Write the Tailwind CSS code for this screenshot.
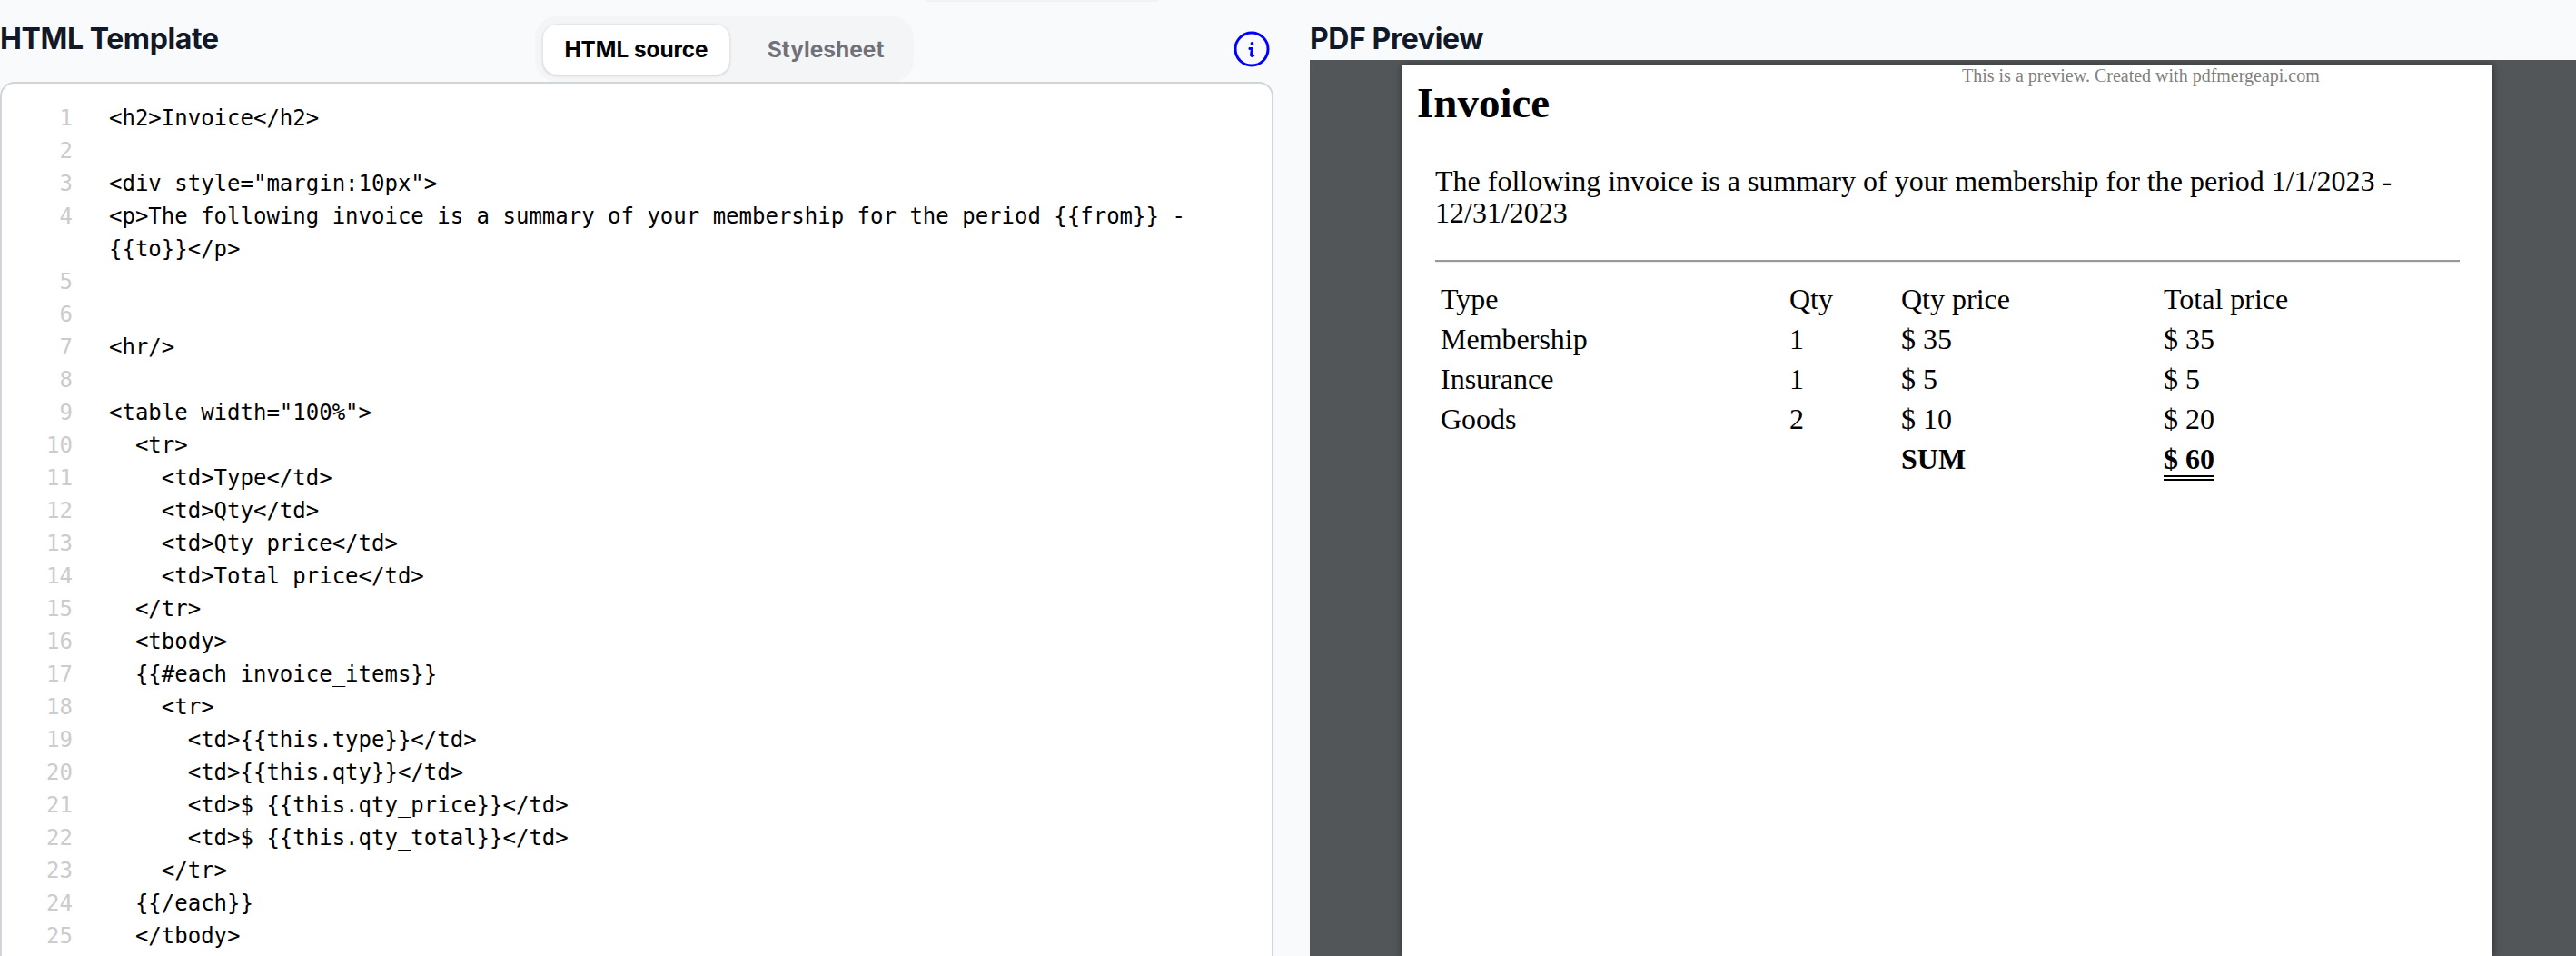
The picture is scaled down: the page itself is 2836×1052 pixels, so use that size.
<!DOCTYPE html>
<html lang="en">
  <head>
    <meta charset="UTF-8" />
    <title>PDF Merge API - Template editor</title>
    <script src="https://cdn.jsdelivr.net/npm/@tailwindcss/browser@4"></script>
  </head>
  <body class="h-screen overflow-hidden bg-[#f9fafb] font-['Inter',sans-serif] text-black">
    <div class="mx-auto h-[2px] w-[256px] translate-x-[-271px] rounded-b bg-[#f1f2f4]"></div>
    <div class="grid h-[1050px] grid-cols-[1402px_1fr] gap-x-[40px]">
      <!-- editor column -->
      <section class="flex min-w-0 flex-col">
        <div class="relative flex h-[88px] items-start">
          <h2 class="mt-[21px] text-[32px] leading-[40px] font-bold tracking-[-0.4px] whitespace-nowrap text-[#111827]">HTML Template</h2>
          <div class="absolute top-[16px] left-[589px] flex h-[72px] w-[417px] items-start rounded-[24px] bg-[#f3f4f6]/80 p-[8px] pb-0">
            <button class="h-[57px] w-[207px] shrink-0 rounded-[16px] border border-[#e5e7eb] bg-white text-[24.3px] font-bold shadow-sm">HTML source</button>
            <button class="h-[57px] w-[194px] shrink-0 pl-[16px] text-[24.5px] font-bold text-[#71717a]">Stylesheet</button>
          </div>
          <svg class="absolute top-[32px] left-[1358px]" width="40" height="40" viewBox="0 0 40 40" fill="none">
            <circle cx="20" cy="20" r="18" stroke="#0000ff" stroke-width="3" />
            <path d="M17.8 19.5h2.6l-1 7c-.1 1 .8 1.4 2.4.6" stroke="#0000ff" stroke-width="2.8" stroke-linecap="round" stroke-linejoin="round" />
            <circle cx="20.5" cy="14" r="1.9" fill="#0000ff" />
          </svg>
        </div>
        <div class="min-h-0 flex-1 overflow-hidden rounded-t-[16px] border-2 border-b-0 border-[#d1d5db] bg-white pt-[20px] font-['DejaVu_Sans_Mono',monospace] text-[24px] leading-[36px] text-black">
          <div class="grid grid-cols-[78px_1fr] gap-x-[40px] pr-[30px]">
            <span class="text-right text-[#ccc]">1</span><pre class="font-[inherit] whitespace-pre-wrap">&lt;h2&gt;Invoice&lt;/h2&gt;</pre>
            <span class="text-right text-[#ccc]">2</span><pre class="font-[inherit] whitespace-pre-wrap"> </pre>
            <span class="text-right text-[#ccc]">3</span><pre class="font-[inherit] whitespace-pre-wrap">&lt;div style="margin:10px"&gt;</pre>
            <span class="text-right text-[#ccc]">4</span><pre class="font-[inherit] whitespace-pre-wrap">&lt;p&gt;The following invoice is a summary of your membership for the period {{from}} - {{to}}&lt;/p&gt;</pre>
            <span class="text-right text-[#ccc]">5</span><pre class="font-[inherit] whitespace-pre-wrap"> </pre>
            <span class="text-right text-[#ccc]">6</span><pre class="font-[inherit] whitespace-pre-wrap"> </pre>
            <span class="text-right text-[#ccc]">7</span><pre class="font-[inherit] whitespace-pre-wrap">&lt;hr/&gt;</pre>
            <span class="text-right text-[#ccc]">8</span><pre class="font-[inherit] whitespace-pre-wrap"> </pre>
            <span class="text-right text-[#ccc]">9</span><pre class="font-[inherit] whitespace-pre-wrap">&lt;table width="100%"&gt;</pre>
            <span class="text-right text-[#ccc]">10</span><pre class="font-[inherit] whitespace-pre-wrap">  &lt;tr&gt;</pre>
            <span class="text-right text-[#ccc]">11</span><pre class="font-[inherit] whitespace-pre-wrap">    &lt;td&gt;Type&lt;/td&gt;</pre>
            <span class="text-right text-[#ccc]">12</span><pre class="font-[inherit] whitespace-pre-wrap">    &lt;td&gt;Qty&lt;/td&gt;</pre>
            <span class="text-right text-[#ccc]">13</span><pre class="font-[inherit] whitespace-pre-wrap">    &lt;td&gt;Qty price&lt;/td&gt;</pre>
            <span class="text-right text-[#ccc]">14</span><pre class="font-[inherit] whitespace-pre-wrap">    &lt;td&gt;Total price&lt;/td&gt;</pre>
            <span class="text-right text-[#ccc]">15</span><pre class="font-[inherit] whitespace-pre-wrap">  &lt;/tr&gt;</pre>
            <span class="text-right text-[#ccc]">16</span><pre class="font-[inherit] whitespace-pre-wrap">  &lt;tbody&gt;</pre>
            <span class="text-right text-[#ccc]">17</span><pre class="font-[inherit] whitespace-pre-wrap">  {{#each invoice_items}}</pre>
            <span class="text-right text-[#ccc]">18</span><pre class="font-[inherit] whitespace-pre-wrap">    &lt;tr&gt;</pre>
            <span class="text-right text-[#ccc]">19</span><pre class="font-[inherit] whitespace-pre-wrap">      &lt;td&gt;{{this.type}}&lt;/td&gt;</pre>
            <span class="text-right text-[#ccc]">20</span><pre class="font-[inherit] whitespace-pre-wrap">      &lt;td&gt;{{this.qty}}&lt;/td&gt;</pre>
            <span class="text-right text-[#ccc]">21</span><pre class="font-[inherit] whitespace-pre-wrap">      &lt;td&gt;$ {{this.qty_price}}&lt;/td&gt;</pre>
            <span class="text-right text-[#ccc]">22</span><pre class="font-[inherit] whitespace-pre-wrap">      &lt;td&gt;$ {{this.qty_total}}&lt;/td&gt;</pre>
            <span class="text-right text-[#ccc]">23</span><pre class="font-[inherit] whitespace-pre-wrap">    &lt;/tr&gt;</pre>
            <span class="text-right text-[#ccc]">24</span><pre class="font-[inherit] whitespace-pre-wrap">  {{/each}}</pre>
            <span class="text-right text-[#ccc]">25</span><pre class="font-[inherit] whitespace-pre-wrap">  &lt;/tbody&gt;</pre>
          </div>
        </div>
      </section>

      <!-- preview column -->
      <section class="flex min-w-0 flex-col">
        <div class="h-[64px]">
          <h2 class="mt-[21px] text-[32px] leading-[40px] font-bold tracking-[-0.4px] whitespace-nowrap text-[#111827]">PDF Preview</h2>
        </div>
        <div class="min-h-0 flex-1 overflow-hidden bg-[#525659] pt-[6px] pl-[102px]">
          <div class="relative h-[980px] w-[1200px] bg-white px-[16px] font-['Liberation_Serif',serif] shadow-[0_0_8px_rgba(0,0,0,0.5)]">
            <p class="absolute top-[-1px] left-[616px] text-[20px] leading-[24px] text-[#808080]">This is a preview. Created with pdfmergeapi.com</p>
            <h1 class="pt-[14px] text-[47px] leading-[54px] font-bold">Invoice</h1>
            <div class="mt-[42px] pr-[20px] pl-[20px]">
              <p class="text-[32px] leading-[35px]">The following invoice is a summary of your membership for the period 1/1/2023 - 12/31/2023</p>
              <hr class="mt-[34px] border-t-[2px] border-b-[1px] border-t-[#999] border-b-[#eee]" />
              <table class="mt-[18px] w-full table-fixed text-[32px] leading-[36px]">
                <colgroup>
                  <col class="w-[390px]" />
                  <col class="w-[123px]" />
                  <col class="w-[289px]" />
                  <col />
                </colgroup>
                <tbody>
                  <tr class="h-[44px]"><td class="pl-[6px]">Type</td><td>Qty</td><td>Qty price</td><td>Total price</td></tr>
                  <tr class="h-[44px]"><td class="pl-[6px]">Membership</td><td>1</td><td>$ 35</td><td>$ 35</td></tr>
                  <tr class="h-[44px]"><td class="pl-[6px]">Insurance</td><td>1</td><td>$ 5</td><td>$ 5</td></tr>
                  <tr class="h-[44px]"><td class="pl-[6px]">Goods</td><td>2</td><td>$ 10</td><td>$ 20</td></tr>
                  <tr class="h-[44px]"><td></td><td></td><td class="align-top pt-[4px] font-bold">SUM</td><td class="align-top pt-[4px] font-bold"><span class="inline-block border-b-[6px] border-double border-black">$ 60</span></td></tr>
                </tbody>
              </table>
            </div>
          </div>
        </div>
      </section>
    </div>
  </body>
</html>
